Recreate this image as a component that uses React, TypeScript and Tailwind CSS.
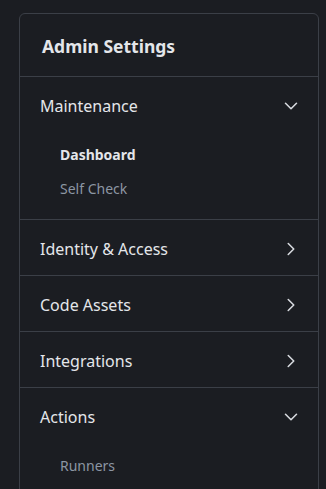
import { ChevronDown, ChevronRight } from "lucide-react";

type Section = { label: string; open: boolean; items?: { label: string; active?: boolean }[] };

const sections: Section[] = [
  { label: "Maintenance", open: true, items: [{ label: "Dashboard", active: true }, { label: "Self Check" }] },
  { label: "Identity & Access", open: false },
  { label: "Code Assets", open: false },
  { label: "Integrations", open: false },
  { label: "Actions", open: true, items: [{ label: "Runners" }] },
];

export default function App() {
  return (
    <div className="min-h-[489px] bg-[#1b1d22] pt-[13px] pl-[19px] font-['Noto_Sans',sans-serif]">
      <div className="w-[300px] rounded-md border border-[#3b3f47] bg-[#1b1d22]">
        <div className="flex h-[63px] items-center border-b border-[#3b3f47] px-[22px] pt-[3px]">
          <h2 className="text-[17.5px] font-bold text-[#e4e6ea]">Admin Settings</h2>
        </div>
        {sections.map((s, i) => (
          <div key={s.label} className={i < sections.length - 1 ? "border-b border-[#3b3f47]" : ""}>
            <div className="flex h-[55px] items-center justify-between pl-5 pr-[16px] pt-[2px]">
              <span className="text-[16px] text-[#e4e6ea]">{s.label}</span>
              {s.open ? (
                <ChevronDown size={22} strokeWidth={1.7} className="text-[#d8dbe0]" />
              ) : (
                <ChevronRight size={22} strokeWidth={1.7} className="text-[#d8dbe0]" />
              )}
            </div>
            {s.open && s.items && (
              <ul className="pt-[5px] pb-[13px]">
                {s.items.map((it) => (
                  <li
                    key={it.label}
                    className={
                      "flex h-[34.5px] items-center pl-10 text-[14px] " +
                      (it.active ? "font-bold text-[#e4e6ea]" : "text-[#8c96a3]")
                    }
                  >
                    {it.label}
                  </li>
                ))}
              </ul>
            )}
          </div>
        ))}
      </div>
    </div>
  );
}
